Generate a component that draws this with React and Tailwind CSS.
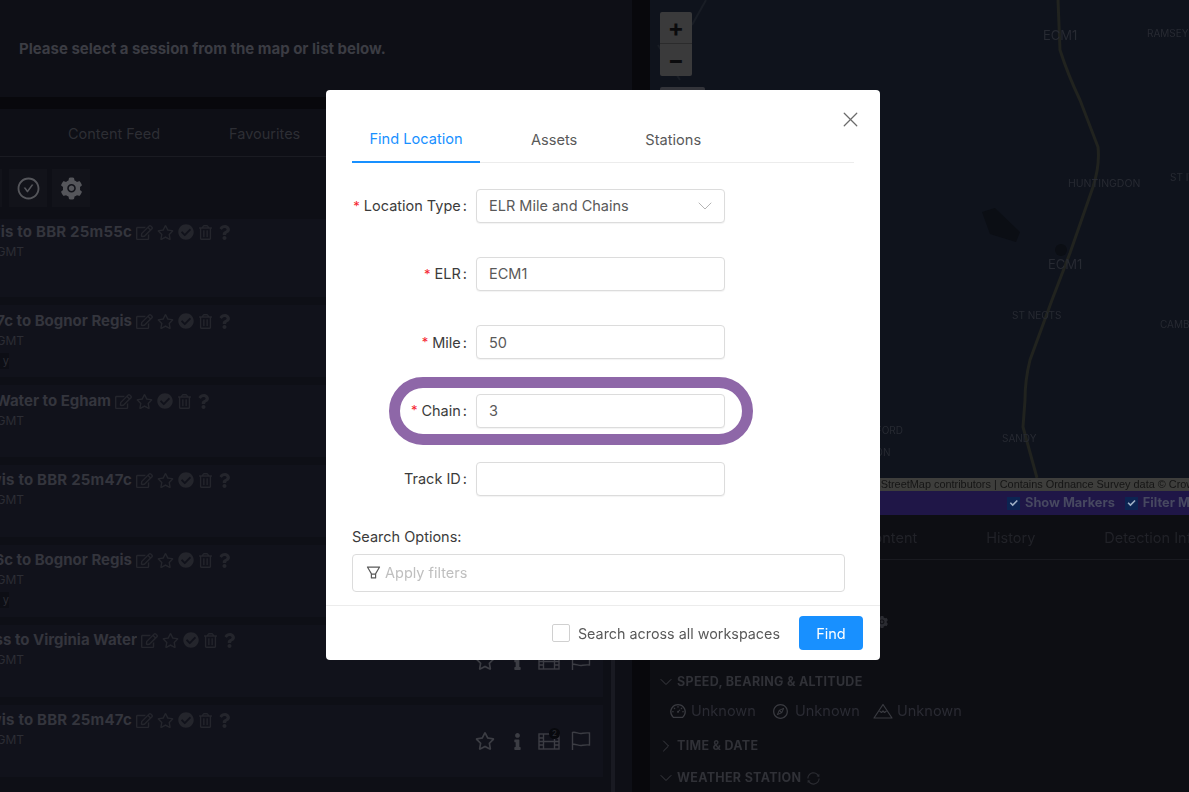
import { ChevronDown, ChevronRight, X } from "lucide-react";
import { AiOutlineCheckCircle, AiFillSetting, AiOutlineFilter, AiOutlineSync, AiOutlineDashboard, AiOutlineCompass } from "react-icons/ai";
import { FaRegEdit, FaRegStar, FaCheckCircle, FaRegTrashAlt, FaQuestion, FaInfo } from "react-icons/fa";

const SESSIONS = [
  { title: "Lewis to BBR 25m55c", w: "w-[132px] tracking-[0.2px]", row: "h-[78px] pt-[4px]" },
  { title: "BBR 25m47c to Bognor Regis", w: "w-[132px]", row: "h-[72px] pt-[7px]", tag: true },
  { title: "Virginia Water to Egham", w: "w-[111px]", row: "h-[72px] pt-[7px]" },
  { title: "Lewis to BBR 25m47c", w: "w-[132px] tracking-[0.2px]", row: "h-[72px] pt-[6px]" },
  { title: "BBR 25m56c to Bognor Regis", w: "w-[132px]", row: "h-[72px] pt-[6px]", tag: true },
  { title: "Weybridge Cross to Virginia Water", w: "w-[137px]", row: "h-[72px] pt-[6px]" },
  { title: "Lewis to BBR 25m47c", w: "w-[132px] tracking-[0.2px]", row: "h-[72px] pt-[6px]" },
];

const MAP_LABELS = [
  { text: "ECM1", cls: "left-[393px] top-[26px] text-[13px]" },
  { text: "RAMSEY", cls: "left-[497px] top-[26px] text-[10px]" },
  { text: "HUNTINGDON", cls: "left-[418px] top-[176px] text-[10.5px]" },
  { text: "ST IVES", cls: "left-[520px] top-[170px] text-[10px]" },
  { text: "ECM1", cls: "left-[398px] top-[255px] text-[13px]" },
  { text: "ST NEOTS", cls: "left-[362px] top-[308px] text-[10px]" },
  { text: "CAMBRIDGE", cls: "left-[510px] top-[317px] text-[10px]" },
  { text: "BEDFORD", cls: "left-[206px] top-[423px] text-[10px]" },
  { text: "LUTON", cls: "left-[206px] top-[445px] text-[10px]" },
  { text: "SANDY", cls: "left-[352px] top-[431px] text-[10px]" },
];

function FilmIcon() {
  return (
    <svg width="22" height="20" viewBox="0 0 22 20" fill="none" stroke="currentColor" strokeWidth="1.4">
      <rect x="1" y="3" width="20" height="15" />
      <path d="M5.5 3v15M16.5 3v15M1 7h4.5M1 10.5h4.5M1 14h4.5M16.5 7H21M16.5 10.5H21M16.5 14H21M5.5 10.5h11" />
    </svg>
  );
}

function FlagIcon() {
  return (
    <svg width="20" height="20" viewBox="0 0 20 20" fill="none" stroke="currentColor" strokeWidth="1.4">
      <path d="M1.5 19V1.5c3-1 6 1.5 9 1 3-.5 5-1 8-.5v12c-3-.5-5 0-8 .5s-6-2-9-1" />
    </svg>
  );
}

function AltitudeIcon() {
  return (
    <svg width="20" height="16" viewBox="0 0 20 16" fill="none" stroke="currentColor" strokeWidth="1.2" strokeLinejoin="round">
      <path d="M1 15h18L10 1.5Z" />
      <path d="M6.5 8l2 1.5L10 8l1.5 1.5 2-1.5" />
    </svg>
  );
}

function SessionRow({ s }) {
  return (
    <div className={`flex bg-[#11121b] ${s.row}`}>
      <div className="flex flex-col">
        <div className="flex items-center h-[18px] text-[#24252c]">
          <div className={`${s.w} flex justify-end overflow-hidden whitespace-nowrap text-[15px] font-bold text-[#34353d]`}>
            <span className="shrink-0">{s.title}</span>
          </div>
          <div className="flex items-center gap-[4px] ml-[4px]">
            <FaRegEdit size={17} />
            <FaRegStar size={17} />
            <FaCheckCircle size={16} />
            <FaRegTrashAlt size={15} />
            <FaQuestion size={15} />
          </div>
        </div>
        <div className="w-[24px] flex justify-end overflow-hidden whitespace-nowrap text-[12px] text-[#2c2d34] mt-[2px]">
          <span className="shrink-0">12:00 GMT</span>
        </div>
        {s.tag && (
          <div className="w-[9px] h-[16px] mt-[3px] bg-[#0d0e15] text-[11px] leading-[16px] text-[#2c2d34] overflow-hidden flex justify-end">
            <span className="shrink-0">y</span>
          </div>
        )}
      </div>
      <div className="ml-auto flex items-center pr-[12px] h-[60px] text-[#3c3d44]">
        <FaRegStar size={20} />
        <div className="ml-[12px] w-[20px] flex justify-center"><FaInfo size={17} /></div>
        <div className="relative ml-[11px]">
          <FilmIcon />
          <span className="absolute -top-[3px] right-0 w-[11px] h-[11px] rounded-full bg-[#08090d] text-[8px] leading-[11px] text-center text-[#2c2d34]">2</span>
        </div>
        <div className="ml-[11px]"><FlagIcon /></div>
      </div>
    </div>
  );
}

function FormRow({ label, required, value, children }) {
  return (
    <div className="flex items-center h-[34px] mb-[34.2px] last:mb-0">
      <div className="w-[115px] flex justify-end items-center text-[14.5px] text-[#3b3b3b] whitespace-nowrap">
        {required && <span className="text-[#f5222d] text-[13px] mr-[4px] leading-none">*</span>}
        <span>{label}</span>
        <span className="ml-[2px]">:</span>
      </div>
      <div className="ml-[9px] w-[249px] h-[34px] flex items-center justify-between px-[12px] border border-[#dcdcdc] rounded-[4px] text-[14.5px] text-[#595959] bg-white shadow-[0_1px_1px_rgba(0,0,0,0.05)]">
        <span>{value}</span>
        {children}
      </div>
    </div>
  );
}

export default function App() {
  return (
    <div className="relative w-[1189px] h-[792px] overflow-hidden bg-[#08080c] [font-family:Inter,sans-serif]">
      <div className="flex h-full blur-[0.5px]">
        {/* left column, sessions */}
        <div className="w-[632px] shrink-0 flex flex-col">
          <div className="h-[97px] pt-[2px] bg-[#0e0f16] flex items-center pl-[19px] text-[15px] font-bold text-[#3b3c43]">
            Please select a session from the map or list below.
          </div>
          <div className="h-[12px] bg-[#08080c]" />
          <div className="flex-1 bg-[#0e0f16] flex flex-col">
            <div className="h-[48px] shrink-0 pt-[2px] border-b border-[#1a1b22] flex items-center text-[14.5px] text-[#2d2e34]">
              <span className="ml-[68px]">Content Feed</span>
              <span className="ml-[69px]">Favourites</span>
            </div>
            <div className="h-[62px] shrink-0 flex items-center gap-[5px] text-[#55565b]">
              <div className="w-[2px] h-[38px] bg-[#12131a] mr-[2px]" />
              <div className="w-[38px] h-[38px] bg-[#12131a] flex items-center justify-center"><AiOutlineCheckCircle size={25} /></div>
              <div className="w-[38px] h-[38px] bg-[#12131a] flex items-center justify-center"><AiFillSetting size={25} /></div>
            </div>
            <div className="flex-1 relative pr-[29px] flex flex-col gap-[8px] overflow-hidden">
              {SESSIONS.map((s, i) => (
                <SessionRow key={i} s={s} />
              ))}
              <div className="absolute right-[17px] top-0 bottom-0 w-[4px] bg-[#191a22]" />
            </div>
          </div>
        </div>

        <div className="w-[18px] shrink-0 bg-[#08080c]" />

        {/* right column, map and details */}
        <div className="flex-1 flex flex-col min-w-0">
          <div className="relative h-[491px] shrink-0 bg-[#0f131c] overflow-hidden">
            <svg className="absolute inset-0" width="539" height="491" viewBox="0 0 539 491" fill="none">
              <path d="M408 0 L410 50 Q418 75 430 100 L448 147 Q450 165 443 187 L420 253 L402 300 L380 360 Q375 380 375 400 L373 427 L387 478" stroke="#21231f" strokeWidth="3" />
              <path d="M56 0 L42 25 M8 45 L30 80" stroke="#191d25" strokeWidth="2" />
              <path d="M332 212 L345 208 L370 232 L366 242 L340 234 Z" fill="#0b0e14" />
              <circle cx="411" cy="250" r="6" fill="#0b0e14" />
            </svg>
            {MAP_LABELS.map((l) => (
              <span key={l.text + l.cls} className={`absolute whitespace-nowrap text-[#272a32] ${l.cls}`}>
                {l.text}
              </span>
            ))}
            <div className="absolute left-[10px] top-[12px] w-[32px] h-[64px] bg-[#3a3a3b] rounded-[2px] flex flex-col text-[#0b0b0d] text-[24px] font-bold leading-none">
              <div className="h-[32px] flex items-center justify-center border-b border-[#2b2b2c]">+</div>
              <div className="h-[32px] flex items-center justify-center">−</div>
            </div>
            <div className="absolute left-[10px] top-[87px] w-[45px] h-[10px] bg-[#33343a] rounded-[2px]" />
            <div className="absolute left-0 right-0 bottom-0 h-[13px] bg-[#3e3e3c] whitespace-nowrap overflow-hidden pl-[193px] text-[10.9px] leading-[13px] text-[#151515] [font-family:'Liberation_Sans',sans-serif]">
              © OpenStreetMap contributors | Contains Ordnance Survey data © Crown copyright
            </div>
          </div>

          <div className="h-[24px] shrink-0 bg-[#1f1647] flex items-center pl-[357px] text-[12.8px] font-bold text-[#474860] whitespace-nowrap overflow-hidden">
            <span className="shrink-0 w-[13px] h-[13px] bg-[#0c2452] text-[#9fb0c6] text-[11px] leading-[13px] text-center">✓</span>
            <span className="shrink-0 ml-[5px]">Show Markers</span>
            <span className="shrink-0 ml-[10px] w-[13px] h-[13px] bg-[#0c2452] text-[#9fb0c6] text-[11px] leading-[13px] text-center">✓</span>
            <span className="shrink-0 ml-[5px]">Filter Markers</span>
          </div>

          <div className="h-[45px] shrink-0 pt-[2px] bg-[#0d0e13] border-b border-[#191a20] flex items-center text-[14.5px] text-[#212228] whitespace-nowrap overflow-hidden">
            <span className="shrink-0 ml-[213px]">Content</span>
            <span className="shrink-0 ml-[69px]">History</span>
            <span className="shrink-0 ml-[69px]">Detection Info</span>
          </div>

          <div className="flex-1 bg-[#0d0e13] pt-[55px] pl-[6px] text-[#303137]">
            <div className="h-[14px] pl-[219px] text-[#2a2b31]"><AiFillSetting size={14} /></div>
            <div className="mt-[43px] h-[20px] flex items-center gap-[1px] text-[12.5px] font-bold tracking-[0.3px]">
              <ChevronDown size={20} strokeWidth={1.2} className="text-[#3a3b41]" />
              SPEED, BEARING &amp; ALTITUDE
            </div>
            <div className="mt-[9px] h-[20px] pl-[13px] flex items-center text-[14.5px] text-[#2a2b33]">
              <AiOutlineDashboard size={18} className="text-[#3a3b41]" />
              <span className="ml-[4px] w-[65px]">Unknown</span>
              <AiOutlineCompass size={17} className="ml-[16px] text-[#3a3b41]" />
              <span className="ml-[6px] w-[64px]">Unknown</span>
              <div className="ml-[14px] text-[#3a3b41]"><AltitudeIcon /></div>
              <span className="ml-[4px]">Unknown</span>
            </div>
            <div className="mt-[15px] h-[20px] flex items-center gap-[1px] text-[12.5px] font-bold tracking-[0.3px]">
              <ChevronRight size={20} strokeWidth={1.2} className="text-[#3a3b41]" />
              TIME &amp; DATE
            </div>
            <div className="mt-[12px] h-[20px] flex items-center gap-[1px] text-[12.5px] font-bold tracking-[0.3px]">
              <ChevronDown size={20} strokeWidth={1.2} className="text-[#3a3b41]" />
              WEATHER STATION
              <AiOutlineSync size={15} className="ml-[4px] text-[#2a2b31]" />
            </div>
          </div>
        </div>
      </div>

      {/* find location modal */}
      <div className="absolute left-[326px] top-[90px] w-[554px] h-[570px] bg-white rounded-[4px] flex flex-col">
        <button className="absolute right-[17px] top-[17px] text-[#6b6b6b]">
          <X size={25} strokeWidth={1.2} />
        </button>
        <div className="mx-[26px] mt-[26px] h-[47px] pt-[1px] flex border-b border-[#ececec] text-[14.6px] text-[#595959]">
          <div className="w-[128px] h-[46px] pt-[2px] flex items-center justify-center text-[#1890ff] border-b-2 border-[#1890ff]">Find Location</div>
          <div className="ml-[51px] h-[46px] pt-[2px] flex items-center">Assets</div>
          <div className="ml-[68px] h-[46px] pt-[2px] flex items-center">Stations</div>
        </div>

        <div className="mt-[26px] mx-[26px]">
          <FormRow label="Location Type" required value="ELR Mile and Chains">
            <ChevronDown size={24} strokeWidth={1} className="text-[#b5b5b5] -mr-[5px]" />
          </FormRow>
          <FormRow label="ELR" required value="ECM1" />
          <FormRow label="Mile" required value="50" />
          <FormRow label="Chain" required value="3" />
          <FormRow label="Track ID" />
        </div>

        <div className="mx-[26px] mt-[31px] text-[14.5px] leading-[20px] text-[#3b3b3b]">Search Options:</div>
        <div className="mx-[26px] mt-[7px] w-[493px] h-[38px] border border-[#dcdcdc] rounded-[4px] flex items-center pl-[12px] text-[14.5px] text-[#bfbfbf]">
          <AiOutlineFilter size={17} className="text-[#595959]" />
          <span className="ml-[3px] pt-[1px]">Apply filters</span>
        </div>

        <div className="mt-[13px] flex-1 border-t border-[#ececec] flex items-center justify-end pr-[17px] text-[14.35px] text-[#595959]">
          <span className="w-[18px] h-[18px] border border-[#d0d0d0] rounded-[2px]" />
          <span className="ml-[8px] pt-[1px]">Search across all workspaces</span>
          <button className="ml-[19px] w-[64px] h-[34px] pt-[1px] rounded-[4px] bg-[#1890ff] text-white text-[14.5px]">Find</button>
        </div>

        {/* purple highlight drawn over the Chain row */}
        <div className="absolute left-[63px] top-[287px] w-[364px] h-[68px] border-[11px] border-[#8e67a8] rounded-full" />
      </div>
    </div>
  );
}
